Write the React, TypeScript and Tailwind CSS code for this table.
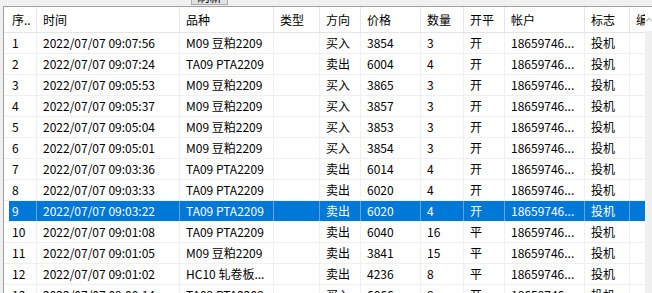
import React from 'react';

interface Trade {
  id: number;
  time: string;
  symbol: string;
  side: string;
  price: string;
  qty: string;
  offset: string;
}

const TRADES: Trade[] = [
  { id: 1, time: '2022/07/07 09:07:56', symbol: 'M09 豆粕2209', side: '买入', price: '3854', qty: '3', offset: '开' },
  { id: 2, time: '2022/07/07 09:07:24', symbol: 'TA09 PTA2209', side: '卖出', price: '6004', qty: '4', offset: '开' },
  { id: 3, time: '2022/07/07 09:05:53', symbol: 'M09 豆粕2209', side: '买入', price: '3865', qty: '3', offset: '开' },
  { id: 4, time: '2022/07/07 09:05:37', symbol: 'M09 豆粕2209', side: '买入', price: '3857', qty: '3', offset: '开' },
  { id: 5, time: '2022/07/07 09:05:04', symbol: 'M09 豆粕2209', side: '买入', price: '3853', qty: '3', offset: '开' },
  { id: 6, time: '2022/07/07 09:05:01', symbol: 'M09 豆粕2209', side: '买入', price: '3854', qty: '3', offset: '开' },
  { id: 7, time: '2022/07/07 09:03:36', symbol: 'TA09 PTA2209', side: '卖出', price: '6014', qty: '4', offset: '开' },
  { id: 8, time: '2022/07/07 09:03:33', symbol: 'TA09 PTA2209', side: '卖出', price: '6020', qty: '4', offset: '开' },
  { id: 9, time: '2022/07/07 09:03:22', symbol: 'TA09 PTA2209', side: '卖出', price: '6020', qty: '4', offset: '开' },
  { id: 10, time: '2022/07/07 09:01:08', symbol: 'TA09 PTA2209', side: '卖出', price: '6040', qty: '16', offset: '平' },
  { id: 11, time: '2022/07/07 09:01:05', symbol: 'M09 豆粕2209', side: '卖出', price: '3841', qty: '15', offset: '平' },
  { id: 12, time: '2022/07/07 09:01:02', symbol: 'HC10 轧卷板...', side: '卖出', price: '4236', qty: '8', offset: '平' },
  { id: 13, time: '2022/07/07 09:00:14', symbol: 'TA09 PTA2209', side: '买入', price: '6066', qty: '8', offset: '开' },
];

const HEADERS = ['序..', '时间', '品种', '类型', '方向', '价格', '数量', '开平', '帐户', '标志', '编号'];

const COLS = 'grid-cols-[33px_143px_94px_46px_41px_60px_43px_41px_80px_45px_60px]';

const SELECTED = 9;

export default function App() {
  return (
    <div
      className="w-[652px] h-[293px] overflow-hidden bg-[#f0f0f0] text-[12px] text-black"
      style={{ fontFamily: '"Noto Sans CJK SC", "Noto Sans", sans-serif' }}
    >
      {/* toolbar, button mostly scrolled off */}
      <div className="h-[6px] overflow-hidden">
        <div className="ml-[191px] -mt-[11px] w-[37px] h-[16px] border border-[#adadad] bg-[#e1e1e1] flex items-center justify-center leading-none">
          刷新
        </div>
      </div>

      {/* list view */}
      <div className="ml-[3px] h-[287px] border-t border-l border-[#a0a0a0] bg-white flex overflow-hidden">
        <div className="flex-1 overflow-hidden">
          <div className={`grid ${COLS} h-[26px] border-b border-[#e5e5e5]`}>
            {HEADERS.map((h, i) => (
              <div
                key={h}
                className={`flex items-center border-r border-[#e5e5e5] whitespace-nowrap overflow-hidden ${i === 0 ? 'pl-[8px]' : 'pl-[6px]'}`}
              >
                {h}
              </div>
            ))}
          </div>

          {TRADES.map((t) => {
            const sel = t.id === SELECTED;
            const cells = [String(t.id), t.time, t.symbol, '', t.side, t.price, t.qty, t.offset, '18659746...', '投机', ''];
            return (
              <div key={t.id} className={`grid ${COLS} h-[21px] border-b border-[#f0f0f0]`}>
                {cells.map((c, i) => (
                  <div
                    key={i}
                    className={`flex items-center whitespace-nowrap overflow-hidden border-r ${
                      sel ? 'text-white border-[#5ea6e6]' : 'border-[#f0f0f0]'
                    } ${sel && i === 0 ? 'bg-[linear-gradient(to_right,white_5px,#0078d7_5px)]' : sel ? 'bg-[#0078d7]' : ''} ${
                      i === 0 ? 'pl-[8px]' : 'pl-[6px]'
                    }`}
                  >
                    {c}
                  </div>
                ))}
              </div>
            );
          })}
        </div>

        {/* vertical scrollbar, clipped by the window edge */}
        <div className="w-[7px] shrink-0 flex flex-col bg-[#f0f0f0]">
          <div className="h-[24px] bg-white flex items-center justify-start pl-[1px]">
            <svg width="8" height="5" viewBox="0 0 8 5" className="text-[#606060]">
              <path d="M0.5 4.5 L4 1 L7.5 4.5" fill="none" stroke="currentColor" strokeWidth="1" />
            </svg>
          </div>
          <div className="flex-1" />
        </div>
      </div>
    </div>
  );
}
